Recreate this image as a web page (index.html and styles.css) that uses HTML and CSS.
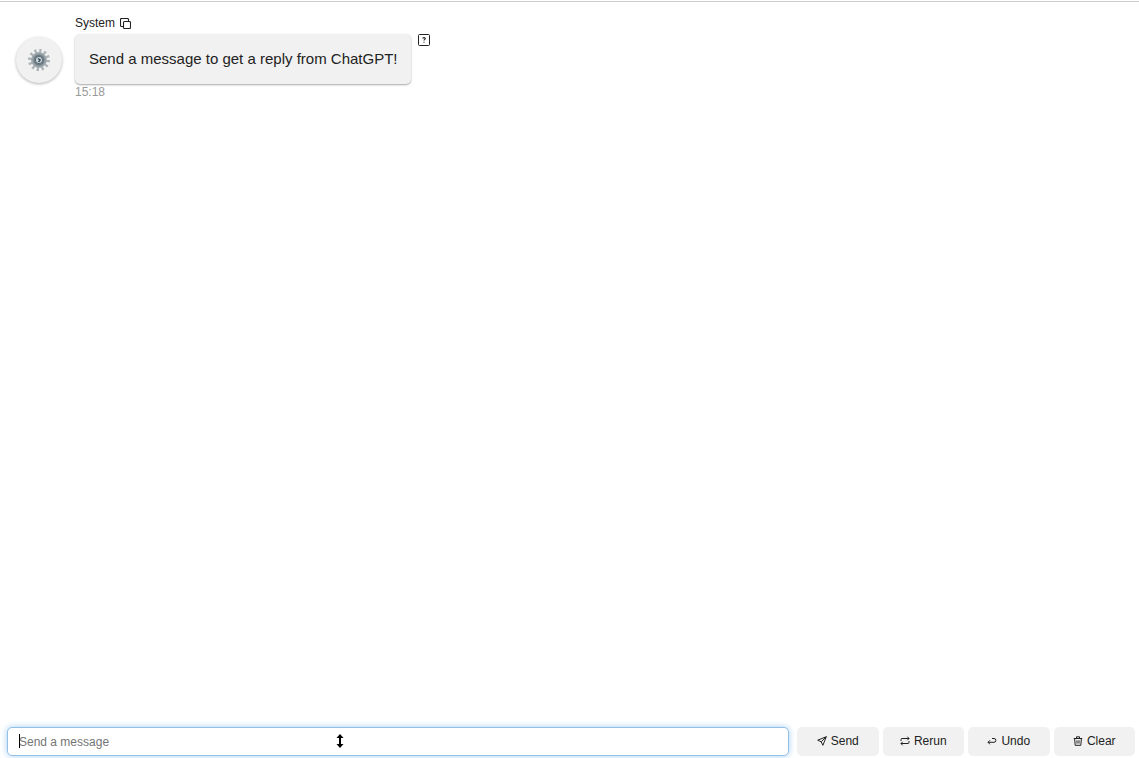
FILE: index.html
```html
<!DOCTYPE html>
<html lang="en">
<head>
    <meta charset="UTF-8">
    <meta name="viewport" content="width=device-width, initial-scale=1.0">
    <title>Chat</title>
    <link rel="stylesheet" href="styles.css">
</head>
<body>
    <div class="chat">
        <!-- Messages -->
        <main class="chat-log">
            <div class="message">
                <div class="avatar">
                    <svg width="24" height="24" viewBox="0 0 24 24">
                        <circle cx="12" cy="12" r="9" fill="none" stroke="#a9b1b5" stroke-width="4" stroke-dasharray="2.1 2.61"/>
                        <circle cx="12" cy="12" r="7.5" fill="#96a1a7" stroke="#a6afb4"/>
                        <circle cx="12" cy="12" r="5.5" fill="#6d7b83"/>
                        <circle cx="12" cy="12" r="3.6" fill="#c9d6de" stroke="#5d6c75"/>
                        <path d="M11 10.5l2.2 1.5-1.7 2" fill="none" stroke="#35434b" stroke-width="1.3"/>
                    </svg>
                </div>
                <div class="content">
                    <div class="name">
                        <span>System</span>
                        <button class="icon-button" aria-label="Copy">
                            <svg width="11" height="11" viewBox="0 0 11 11" fill="none" stroke="#222" stroke-width="1.1">
                                <rect x="3.5" y="3.5" width="7" height="7" rx="1"/>
                                <path d="M3.5 8.5h-2q-1 0-1-1v-6q0-1 1-1h6q1 0 1 1v2"/>
                            </svg>
                        </button>
                    </div>
                    <div class="bubble">Send a message to get a reply from ChatGPT!</div>
                    <div class="time">15:18</div>
                </div>
                <button class="icon-button reaction" aria-label="Reaction">
                    <svg width="12" height="12" viewBox="0 0 12 12" fill="none" stroke="#222">
                        <rect x="0.5" y="0.5" width="11" height="11" rx="1"/>
                        <path d="M4.7 4.6q0-1 1.3-1t1.3 1q0 .6-.8 1-.5.3-.5 1M6 7.7v1" stroke-width="1.1"/>
                    </svg>
                </button>
            </div>
        </main>

        <!-- Input row -->
        <form class="chat-input" onsubmit="return false">
            <div class="field">
                <input type="text" id="message" placeholder="Send a message" aria-label="Message" autocomplete="off">
                <span class="caret"></span>
                <svg class="pointer" width="8" height="14" viewBox="0 0 8 14">
                    <path d="M4 0l3.5 4H5v6h2.5L4 14 .5 10H3V4H.5z"/>
                </svg>
            </div>
            <div class="actions">
                <button type="submit">
                    <svg width="10" height="10" viewBox="0 0 10 10" fill="none" stroke="#222" stroke-linejoin="round">
                        <path d="M9.3.7L.7 4.2l3.5 1.6 1.7 3.5zM9.3.7L4.2 5.8"/>
                    </svg>
                    Send
                </button>
                <button type="button">
                    <svg width="10" height="10" viewBox="0 0 10 10" fill="none" stroke="#222" stroke-linejoin="round">
                        <path d="M1 5V3.5q0-1 1-1h7M7.4.7L9 2.5 7.4 4.2M9 5v1.5q0 1-1 1H1M2.6 5.8L1 7.5l1.6 1.8"/>
                    </svg>
                    Rerun
                </button>
                <button type="button">
                    <svg width="10" height="10" viewBox="0 0 10 10" fill="none" stroke="#222" stroke-linejoin="round">
                        <path d="M5 2.5h2a1.9 1.9 0 0 1 0 3.8H1M3 4.3l-2 2 2 2"/>
                    </svg>
                    Undo
                </button>
                <button type="button">
                    <svg width="10" height="10" viewBox="0 0 10 10" fill="none" stroke="#222" stroke-linejoin="round">
                        <path d="M.7 2.5h8.6M3.5 2.3V.8h3v1.5M1.6 2.5l.6 6.8h5.6l.6-6.8M4 4.3v3.3M6 4.3v3.3"/>
                    </svg>
                    Clear
                </button>
            </div>
        </form>
    </div>
</body>
</html>
```

FILE: styles.css
```css
* {
    box-sizing: border-box;
}

body {
    margin: 0;
    font-family: "Liberation Sans", Arial, sans-serif;
    color: #222;
    background: #fff;
}

.chat {
    display: flex;
    flex-direction: column;
    min-height: 100vh;
    padding: 1px 0 2px;
}

.chat-log {
    flex: 1;
    padding: 14px 16px;
    border-top: 1px solid #ccc;
}

.message {
    display: flex;
    align-items: flex-start;
}

.avatar {
    display: flex;
    align-items: center;
    justify-content: center;
    width: 46px;
    height: 46px;
    margin: 21px 13px 0 0;
    border-radius: 50%;
    background: #f1f1f1;
    box-shadow: 0 1px 3px rgba(0, 0, 0, 0.3);
}

.name {
    display: flex;
    align-items: center;
    gap: 5px;
    height: 14px;
    font-size: 12px;
}

.icon-button {
    display: flex;
    padding: 0;
    border: none;
    background: none;
    cursor: pointer;
}

.bubble {
    margin: 4px 0 1px;
    padding: 15px 14px;
    border-radius: 5px;
    background: #f1f1f1;
    box-shadow: 0 1px 2px rgba(0, 0, 0, 0.35);
    font-size: 15px;
    line-height: 20px;
}

.time {
    font-size: 12px;
    line-height: 14px;
    color: #999;
}

.reaction {
    margin: 18px 0 0 7px;
}

.chat-input {
    display: flex;
    gap: 8px;
    padding: 0 4px 0 7px;
}

.field {
    position: relative;
    flex: 1;
}

.field input {
    display: block;
    width: 100%;
    height: 29px;
    padding: 0 11px;
    border: 1px solid #94bfe6;
    border-radius: 5px;
    outline: none;
    box-shadow: 0 0 6px rgba(102, 175, 233, 0.6);
    font-family: inherit;
    font-size: 12px;
    color: #222;
}

.field input::placeholder {
    color: #757575;
}

.caret {
    position: absolute;
    top: 7px;
    left: 12px;
    width: 1px;
    height: 14px;
    background: #000;
}

.pointer {
    position: absolute;
    top: 7px;
    left: 329px;
}

.actions {
    display: grid;
    grid-template-columns: repeat(4, 1fr);
    gap: 4px;
    width: 338px;
}

.actions button {
    display: flex;
    align-items: center;
    justify-content: center;
    gap: 4px;
    height: 29px;
    padding: 0 0 2px;
    border: none;
    border-radius: 5px;
    background: #f1f1f1;
    font-family: inherit;
    font-size: 12px;
    color: #222;
    cursor: pointer;
}

.actions button:hover {
    background: #e6e6e6;
}
```
